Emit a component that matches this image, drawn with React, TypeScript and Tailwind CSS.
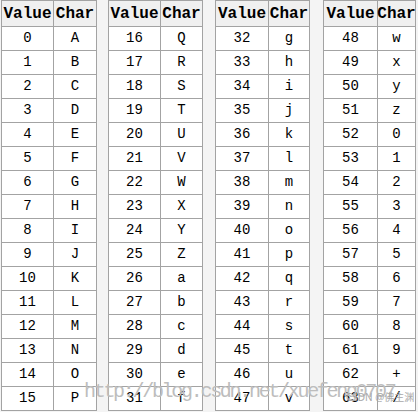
import React from "react";

const chars = "ABCDEFGHIJKLMNOPQRSTUVWXYZabcdefghijklmnopqrstuvwxyz0123456789+/";

const groups = [
  { start: 0, v: "w-[52px]", c: "w-[43px]" },
  { start: 16, v: "w-[52px]", c: "w-[42px]" },
  { start: 32, v: "w-[53px]", c: "w-[41px]" },
  { start: 48, v: "w-[54px]", c: "w-[38px]" },
];

const gaps = ["w-[11px]", "w-[12px]", "w-[13px]"];

function Group({ start, v, c }: { start: number; v: string; c: string }) {
  const rows = Array.from({ length: 16 }, (_, i) => start + i);
  return (
    <div className="flex flex-col border-l border-t border-[#a3a3a3] bg-white">
      <div className="flex h-[26px] bg-[#f0f0f0] font-bold text-[16px]">
        <div className={`${v} flex items-center justify-center border-r border-b border-[#a3a3a3]`}>Value</div>
        <div className={`${c} flex items-center justify-center border-r border-b border-[#a3a3a3]`}>Char</div>
      </div>
      {rows.map((n) => (
        <div key={n} className="flex h-[24px] text-[14px]">
          <div className={`${v} flex items-center justify-center border-r border-b border-[#a3a3a3]`}>{n}</div>
          <div className={`${c} flex items-center justify-center border-r border-b border-[#a3a3a3]`}>{chars[n]}</div>
        </div>
      ))}
    </div>
  );
}

export default function App() {
  return (
    <div
      className="relative w-[418px] h-[412px] overflow-hidden bg-[#f4f4f4] text-black"
      style={{ fontFamily: '"Liberation Mono", "DejaVu Sans Mono", monospace' }}
    >
      <div className="flex pl-[1px]">
        <Group {...groups[0]} />
        <div className={gaps[0]} />
        <Group {...groups[1]} />
        <div className={gaps[1]} />
        <Group {...groups[2]} />
        <div className={gaps[2]} />
        <Group {...groups[3]} />
      </div>
      <div className="absolute left-[84px] top-[382px] text-[20px] tracking-[-2.3px] text-[#bdbdbd] leading-none pointer-events-none whitespace-nowrap">
        http://blog.csdn.net/xuefeng0707
      </div>
      <div
        className="absolute left-[346px] top-[392px] text-[10px] leading-none text-[#a8a8a8] whitespace-nowrap"
        style={{ fontFamily: '"Noto Sans", "Noto Sans CJK SC", sans-serif' }}
      >
        CSDN @佛主渊
      </div>
    </div>
  );
}
